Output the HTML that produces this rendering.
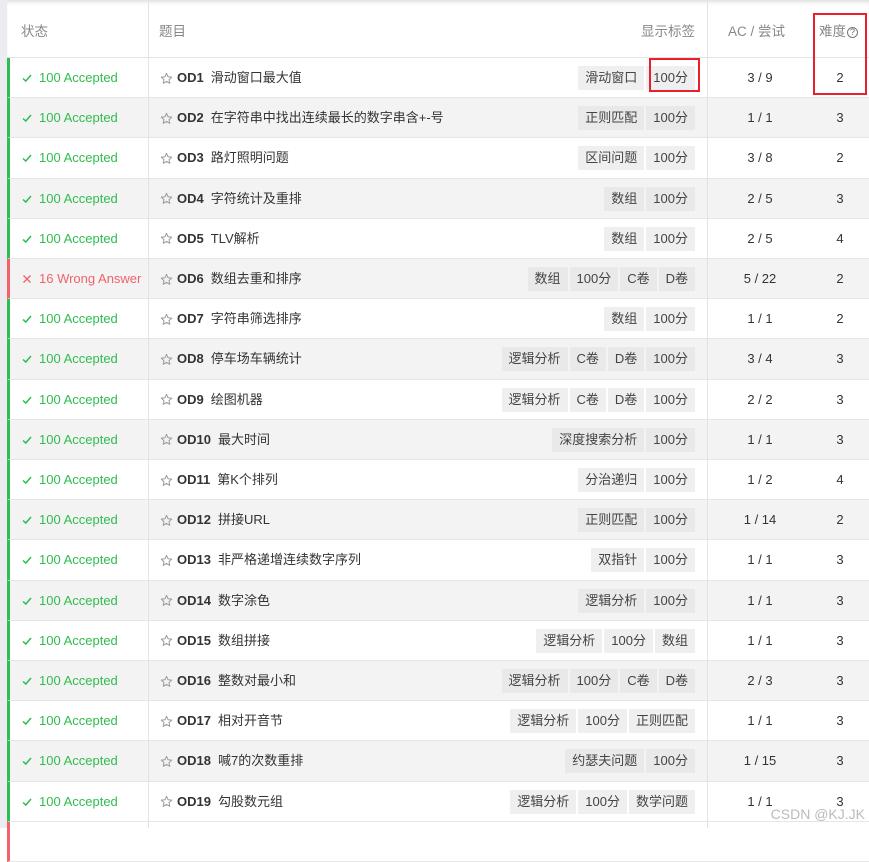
<!DOCTYPE html><html><head><meta charset="utf-8"><style>
*{box-sizing:border-box;margin:0;padding:0}
body{width:869px;height:828px;overflow:hidden;background:#fff;font-family:"Liberation Sans","Noto Sans CJK SC",sans-serif;font-size:13px;color:#333;position:relative}
.strip{position:absolute;left:0;top:0;width:7px;height:828px;background:#ececf0}
.hdr{position:absolute;left:7px;top:0;width:862px;height:58px;border-bottom:1px solid #e3e3e3;box-shadow:inset 0 4px 4px -2px #ddd;color:#888;font-size:13.5px}
.hdr span{position:absolute;top:20px}
.row{position:absolute;left:7px;width:862px;height:40.2px;border-bottom:1px solid #e6e6e6;border-left:3px solid #2ebd4e}
.row.g{background:#f3f3f3}
.row.w{border-left-color:#f2626a}
.st,.t,.ac,.df{position:absolute;top:10px;height:20px;line-height:20px;display:flex;align-items:center}
.st{left:12px;color:#2ebd4e;gap:7px}
.w .st{color:#f2626a}
.t{left:150px;color:#333}
.t b{font-weight:bold;color:#333;margin-right:7px}
.star{margin-right:4px}
.tags{position:absolute;right:174px;top:8px;display:flex;gap:2px}
.tags i{font-style:normal;background:#efefef;height:24px;line-height:24px;padding:0 7px;font-size:13px;color:#444}
.g .tags i{background:#e9e9e9}
.ac{left:700px;width:100px;justify-content:center}
.df{left:800px;width:60px;justify-content:center}
.vl{position:absolute;top:0;width:1px;height:828px;background:#e3e3e3}
.box{position:absolute;border:2px solid #e8202a}
.wm{position:absolute;right:4px;bottom:6px;color:#bbb;font-size:14px}
</style></head><body>
<div class="strip"></div>
<div class="hdr"><span style="left:14px">状态</span><span style="left:152px">题目</span><span style="left:634px">显示标签</span><span style="left:721px">AC / 尝试</span><span style="left:812px">难度<span style="position:static;font-size:9px;border:1px solid #777;border-radius:50%;display:inline-block;width:11px;height:11px;line-height:9px;text-align:center;margin-left:1px;vertical-align:1px;color:#666">?</span></span></div>
<div id="rows"></div>
<div class="vl" style="left:148px"></div>
<div class="vl" style="left:707px"></div>
<div class="box" style="left:649px;top:58px;width:51px;height:34px"></div>
<div class="box" style="left:813px;top:13px;width:54px;height:82px"></div>
<div class="wm">CSDN @KJ.JK</div>
<script>
(function(){
var d=[["滑动窗口,100分","3 / 9",2],["正则匹配,100分","1 / 1",3],["区间问题,100分","3 / 8",2],["数组,100分","2 / 5",3],["数组,100分","2 / 5",4],["数组,100分,C卷,D卷","5 / 22",2],["数组,100分","1 / 1",2],["逻辑分析,C卷,D卷,100分","3 / 4",3],["逻辑分析,C卷,D卷,100分","2 / 2",3],["深度搜索分析,100分","1 / 1",3],["分治递归,100分","1 / 2",4],["正则匹配,100分","1 / 14",2],["双指针,100分","1 / 1",3],["逻辑分析,100分","1 / 1",3],["逻辑分析,100分,数组","1 / 1",3],["逻辑分析,100分,C卷,D卷","2 / 3",3],["逻辑分析,100分,正则匹配","1 / 1",3],["约瑟夫问题,100分","1 / 15",3],["逻辑分析,100分,数学问题","1 / 1",3]];
var n=["滑动窗口最大值","在字符串中找出连续最长的数字串含+-号","路灯照明问题","字符统计及重排","TLV解析","数组去重和排序","字符串筛选排序","停车场车辆统计","绘图机器","最大时间","第K个排列","拼接URL","非严格递增连续数字序列","数字涂色","数组拼接","整数对最小和","相对开音节","喊7的次数重排","勾股数元组"];
var ck='<svg width="10" height="10" viewBox="0 0 10 10"><path d="M1 5.5L3.8 8L9 2" fill="none" stroke="#2ebd4e" stroke-width="1.5"/></svg>';
var xx='<svg width="10" height="10" viewBox="0 0 10 10"><path d="M1.5 1.5L8.5 8.5M8.5 1.5L1.5 8.5" fill="none" stroke="#f2626a" stroke-width="1.4"/></svg>';
var st='<svg class="star" width="13" height="13" viewBox="0 0 24 24"><path d="M12 2.5l2.9 6.3 6.8.7-5.1 4.6 1.5 6.8L12 17.4l-6.1 3.5 1.5-6.8-5.1-4.6 6.8-.7z" fill="none" stroke="#999" stroke-width="1.8" stroke-linejoin="round"/></svg>';
var h="";
for(var i=0;i<20;i++){var yy=58+i*40.2;
if(i==19){h+='<div class="row w" style="top:'+yy+'px"></div>';break;}
var wa=i==5;
h+='<div class="row'+(i%2?' g':'')+(wa?' w':'')+'" style="top:'+yy+'px"><div class="st">'+(wa?xx+'<span>16 Wrong Answer</span>':ck+'<span>100 Accepted</span>')+'</div><div class="t">'+st+'<b>OD'+(i+1)+'</b><span>'+n[i]+'</span></div><div class="tags">'+d[i][0].split(',').map(function(x){return '<i>'+x+'</i>'}).join('')+'</div><div class="ac">'+d[i][1]+'</div><div class="df">'+d[i][2]+'</div></div>';}
document.getElementById('rows').innerHTML=h;
})();
</script>
</body></html>
